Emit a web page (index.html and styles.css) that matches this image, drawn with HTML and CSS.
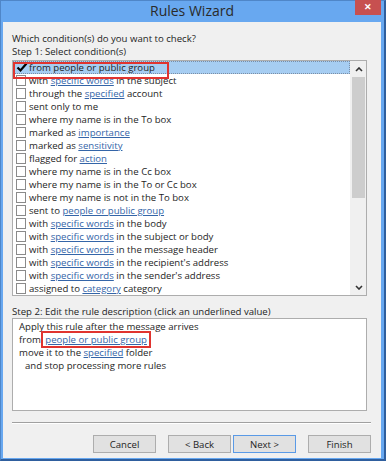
FILE: index.html
```html
<!DOCTYPE html>
<html lang="en">
<head>
  <meta charset="UTF-8" />
  <title>Rules Wizard</title>
  <link rel="stylesheet" href="styles.css">
</head>
<body>
  <div class="window">
    <div class="titlebar">
      <span></span>
      <span class="title">Rules Wizard</span>
      <button class="close">&#x2715;</button>
    </div>

    <div class="content">
      <p class="label">Which condition(s) do you want to check?</p>
      <p class="label">Step 1: Select condition(s)</p>

      <!-- Step 1 list -->
      <div class="listbox">
        <ul class="conditions">
          <li class="selected"><span class="mark"><svg width="12" height="11" viewBox="0 0 12 11"><path d="M1.5 5.5 L4.5 8.5 L10.5 1.5" fill="none" stroke="#000" stroke-width="2.2"/></svg></span>from people or public group</li>
          <li><span class="box"></span>with <a>specific words</a> in the subject</li>
          <li><span class="box"></span>through the <a>specified</a> account</li>
          <li><span class="box"></span>sent only to me</li>
          <li><span class="box"></span>where my name is in the To box</li>
          <li><span class="box"></span>marked as <a>importance</a></li>
          <li><span class="box"></span>marked as <a>sensitivity</a></li>
          <li><span class="box"></span>flagged for <a>action</a></li>
          <li><span class="box"></span>where my name is in the Cc box</li>
          <li><span class="box"></span>where my name is in the To or Cc box</li>
          <li><span class="box"></span>where my name is not in the To box</li>
          <li><span class="box"></span>sent to <a>people or public group</a></li>
          <li><span class="box"></span>with <a>specific words</a> in the body</li>
          <li><span class="box"></span>with <a>specific words</a> in the subject or body</li>
          <li><span class="box"></span>with <a>specific words</a> in the message header</li>
          <li><span class="box"></span>with <a>specific words</a> in the recipient's address</li>
          <li><span class="box"></span>with <a>specific words</a> in the sender's address</li>
          <li><span class="box"></span>assigned to <a>category</a> category</li>
        </ul>
        <div class="scrollbar">
          <div class="arrow">
            <svg width="8" height="5" viewBox="0 0 8 5"><path d="M1 4 L4 1 L7 4" fill="none" stroke="#333" stroke-width="1.6"/></svg>
          </div>
          <div class="track"><div class="thumb"></div></div>
          <div class="arrow">
            <svg width="8" height="5" viewBox="0 0 8 5"><path d="M1 1 L4 4 L7 1" fill="none" stroke="#333" stroke-width="1.6"/></svg>
          </div>
        </div>
      </div>

      <p class="label step2">Step 2: Edit the rule description (click an underlined value)</p>

      <!-- Step 2 description -->
      <div class="description">
        <p>Apply this rule after the message arrives</p>
        <p>from <a class="outlined">people or public group</a></p>
        <p>move it to the <a>specified</a> folder</p>
        <p class="indent">and stop processing more rules</p>
      </div>

      <hr class="separator">

      <div class="buttons">
        <button>Cancel</button>
        <button>&lt; Back</button>
        <button class="default">Next &gt;</button>
        <button>Finish</button>
      </div>
    </div>
  </div>
</body>
</html>
```

FILE: styles.css
```css
* {
  box-sizing: border-box;
  margin: 0;
  padding: 0;
}

body {
  font-family: 'Open Sans', sans-serif;
  font-size: 9.6px;
  color: #1e1e1e;
  background: #fff;
}

.window {
  width: 386px;
  height: 461px;
  background: #68a8f0;
  border: 1px solid #4f86c8;
  border-right: 2px solid #2f5f9e;
  border-bottom: 2px solid #2f5f9e;
  padding: 0 3px 1px 2px;
  display: flex;
  flex-direction: column;
}

.titlebar {
  height: 21px;
  display: grid;
  grid-template-columns: 1fr auto 1fr;
  align-items: start;
}

.title {
  font-size: 14px;
  line-height: 20px;
  color: #2a2a2a;
}

.close {
  justify-self: end;
  width: 26px;
  height: 15px;
  margin-top: -1px;
  border: none;
  background: #c75050;
  color: #fff;
  font-size: 9px;
  font-weight: bold;
  line-height: 15px;
}

.content {
  flex: 1;
  background: #f0f0f0;
  padding: 10px 12px 0 9px;
}

.label {
  line-height: 13px;
}

.listbox {
  margin-top: 2px;
  width: 355px;
  height: 236px;
  border: 1px solid #adadad;
  background: #fff;
  display: flex;
}

.conditions {
  flex: 1;
  list-style: none;
}

.conditions li {
  height: 13px;
  line-height: 13px;
  white-space: nowrap;
}

.conditions li.selected {
  background: #a6cdf2;
  outline: 1px dotted #7a8ea6;
  outline-offset: -1px;
  position: relative;
}

.conditions li.selected::after {
  content: "";
  position: absolute;
  left: 0;
  top: 1px;
  width: 152px;
  height: 13px;
  border: 2px solid #e0342f;
}

.box,
.mark {
  display: inline-block;
  vertical-align: top;
  width: 11px;
  height: 11px;
  margin: 1px 2px 0 3px;
}

.box {
  width: 10px;
  margin-right: 3px;
  border: 1px solid #8a8a8a;
  background: #fff;
}

.mark svg {
  display: block;
}

.conditions a,
.description a {
  color: #3465a8;
  text-decoration: underline;
  text-underline-offset: 1px;
}

.scrollbar {
  width: 16px;
  display: flex;
  flex-direction: column;
  background: #f0f0f0;
  border-left: 1px solid #f0f0f0;
}

.arrow {
  height: 16px;
  display: flex;
  align-items: center;
  justify-content: center;
}

.track {
  flex: 1;
}

.thumb {
  height: 121px;
  margin: 0 1px;
  background: #cdcdcd;
}

.step2 {
  margin-top: 9px;
}

.description {
  width: 355px;
  height: 93px;
  border: 1px solid #adadad;
  background: #fff;
  padding: 1px 6px;
}

.description p {
  line-height: 13px;
}

.description .indent {
  padding-left: 6px;
}

.outlined {
  outline: 2px solid #e0342f;
  padding: 0 2px;
}

.separator {
  margin-top: 11px;
  width: 359px;
  border: none;
  border-top: 1px solid #a0a0a0;
  border-bottom: 1px solid #fff;
}

.buttons {
  margin-top: 11px;
  width: 359px;
  display: flex;
  justify-content: flex-end;
  gap: 12px;
}

.buttons button {
  width: 63px;
  height: 18px;
  font-family: 'Open Sans', sans-serif;
  font-size: 9.6px;
  color: #1e1e1e;
  background: #e1e1e1;
  border: 1px solid #adadad;
}

.buttons button.default {
  margin-left: -10px;
  border-color: #5a9ae6;
}
```
